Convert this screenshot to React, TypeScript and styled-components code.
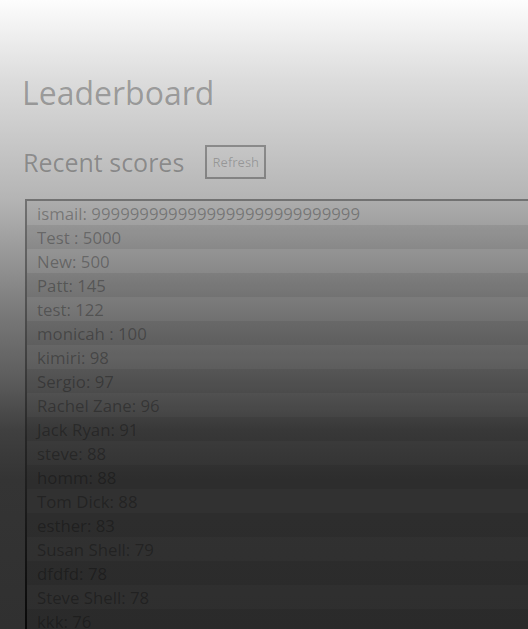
import React from 'react'
import styled, { createGlobalStyle } from 'styled-components'

const GlobalStyle = createGlobalStyle`
  html, body {
    margin: 0;
    padding: 0;
    overflow-x: hidden;
  }
  body {
    min-height: 100vh;
    background: linear-gradient(
      to bottom,
      #fdfdfd 0px,
      #dcdcdc 80px,
      #b4b4b4 200px,
      #787878 315px,
      #5c5c5c 380px,
      #404040 430px,
      #343434 480px,
      #303030 100%
    );
    background-attachment: fixed;
    font-family: 'Open Sans', 'DejaVu Sans', sans-serif;
  }
`

const scores = [
  { name: `ismail`, score: `9999999999999999999999999999`, sep: `: ` },
  { name: `Test`, score: `5000`, sep: ` : ` },
  { name: `New`, score: `500`, sep: `: ` },
  { name: `Patt`, score: `145`, sep: `: ` },
  { name: `test`, score: `122`, sep: `: ` },
  { name: `monicah`, score: `100`, sep: ` : ` },
  { name: `kimiri`, score: `98`, sep: `: ` },
  { name: `Sergio`, score: `97`, sep: `: ` },
  { name: `Rachel Zane`, score: `96`, sep: `: ` },
  { name: `Jack Ryan`, score: `91`, sep: `: ` },
  { name: `steve`, score: `88`, sep: `: ` },
  { name: `homm`, score: `88`, sep: `: ` },
  { name: `Tom Dick`, score: `88`, sep: `: ` },
  { name: `esther`, score: `83`, sep: `: ` },
  { name: `Susan Shell`, score: `79`, sep: `: ` },
  { name: `dfdfd`, score: `78`, sep: `: ` },
  { name: `Steve Shell`, score: `78`, sep: `: ` },
  { name: `kkk`, score: `76`, sep: `: ` },
]

const App = () => {
  return (
    <>
      <GlobalStyle />
      <StyledPage>
        <StyledTitle>Leaderboard</StyledTitle>
        <StyledHeader>
          <StyledSubtitle>Recent scores</StyledSubtitle>
          <StyledRefresh type="button">Refresh</StyledRefresh>
        </StyledHeader>
        <StyledList>
          {scores.map((item, index) => (
            <StyledRow key={item.name} striped={index % 2 === 1}>
              {item.name}
              {item.sep}
              {item.score}
            </StyledRow>
          ))}
        </StyledList>
      </StyledPage>
    </>
  )
}

export default App

const StyledPage = styled.main`
  display: flex;
  flex-direction: column;
  align-items: flex-start;
  padding: 71px 0 0 22px;
`
const StyledTitle = styled.h1`
  margin: 0;
  font-size: 32px;
  font-weight: 400;
  line-height: 44px;
  color: rgba(0, 0, 0, 0.3);
`
const StyledHeader = styled.div`
  display: flex;
  flex-direction: row;
  align-items: center;
  gap: 21px;
  margin: 30px 0 20px 1px;
`
const StyledSubtitle = styled.h2`
  margin: 0;
  font-size: 25px;
  font-weight: 400;
  line-height: 34px;
  color: rgba(0, 0, 0, 0.3);
`
const StyledRefresh = styled.button`
  width: 61px;
  height: 34px;
  padding: 0;
  background: transparent;
  border: 2px solid rgba(0, 0, 0, 0.3);
  font-family: inherit;
  font-size: 13px;
  color: rgba(0, 0, 0, 0.22);
  cursor: pointer;
`
const StyledList = styled.ul`
  margin: 0 0 0 3px;
  padding: 0;
  list-style: none;
  width: 540px;
  border: 2px solid #6f6f6f;
  border-image: linear-gradient(to bottom, #727272, #262626 55%, #080808) 1;
  background: rgba(0, 0, 0, 0.04);
`
const StyledRow = styled.li<{ striped: boolean }>`
  height: 24px;
  padding: 1px 0 0 10px;
  box-sizing: border-box;
  font-size: 16.8px;
  font-weight: 400;
  line-height: 23px;
  color: rgba(0, 0, 0, 0.3);
  background: ${(p) => (p.striped ? `rgba(0, 0, 0, 0.07)` : `transparent`)};
  white-space: nowrap;
`
